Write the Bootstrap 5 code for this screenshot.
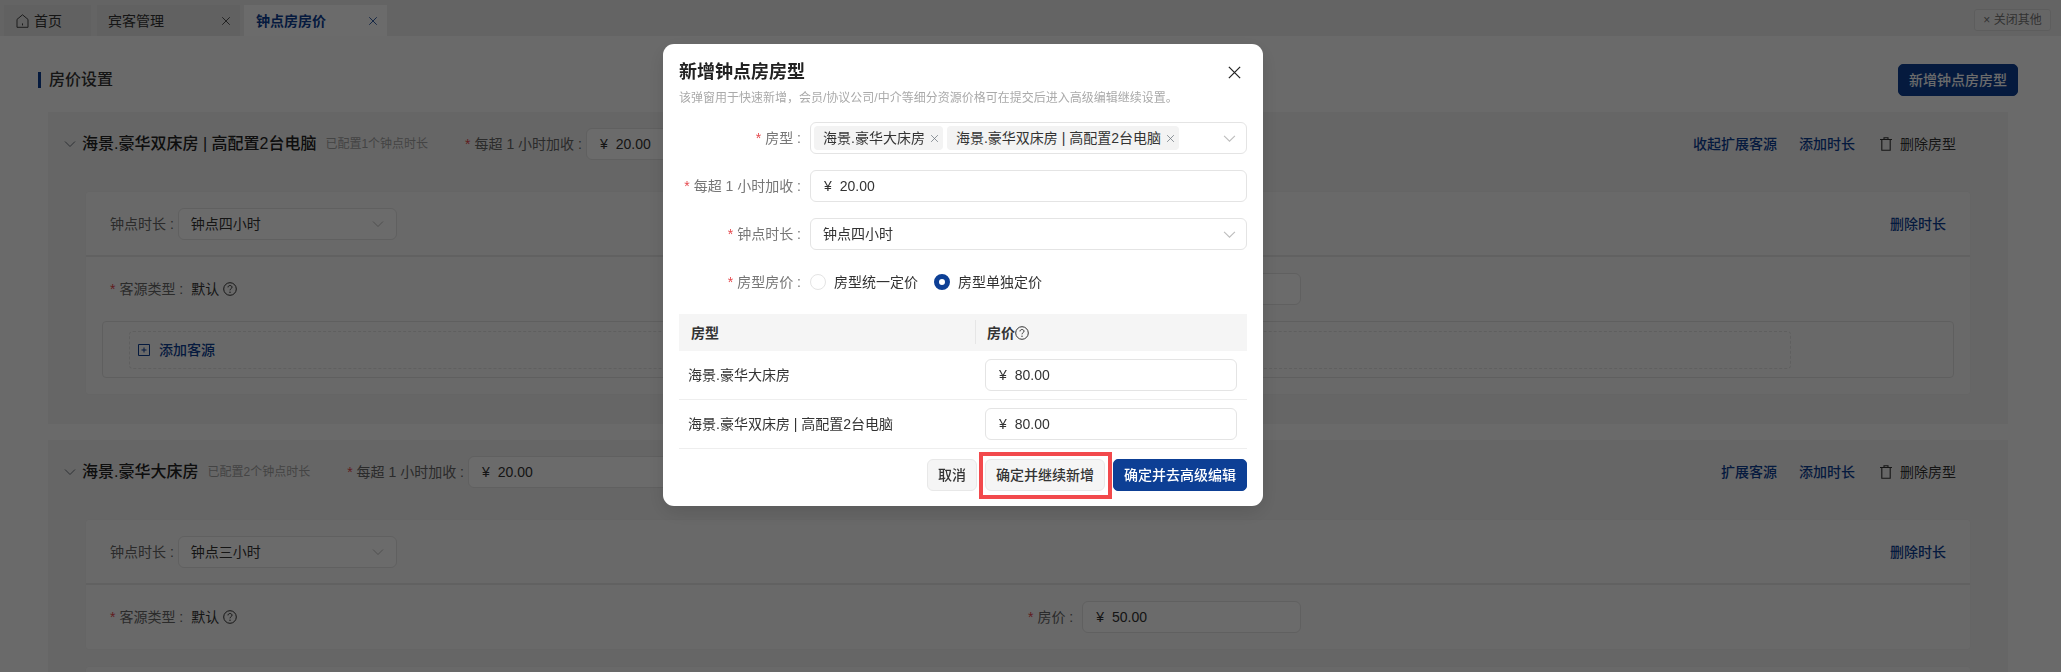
<!DOCTYPE html>
<html lang="zh-CN">
<head>
    <meta charset="UTF-8">
    <meta name="viewport" content="width=device-width, initial-scale=1.0">
    <title>钟点房房价</title>
    <link href="https://cdn.jsdelivr.net/npm/bootstrap@5.3.0/dist/css/bootstrap.min.css" rel="stylesheet">
    <style>
        html, body {
            height: 100%;
            overflow: hidden;
        }
        body {
            font-family: "Liberation Sans", "Noto Sans CJK SC", sans-serif;
            font-size: 14px;
            line-height: 20px;
            color: #333;
            background-color: #fdfdfd;
        }
        svg {
            display: block;
            flex: none;
        }
        .navy { color: #0d3f95; }
        .star { color: #e5484d; margin-right: 4px; }
        .lbl { color: #666; }
        .chev-soft { color: #bdbdbd; }

        /* tabs */
        .tab-strip {
            height: 36px;
            padding: 5px 10px 0 4px;
            background-color: #eeeeee;
        }
        .tab-item {
            height: 31px;
            padding: 0 9px 0 12px;
            background-color: #e6e6e6;
        }
        .tab-home { width: 87px; gap: 5px; }
        .tab-guest { width: 143px; margin-left: 6px; padding-left: 11px; }
        .tab-price { width: 143px; margin-left: 4px; background-color: #fff; }
        .close-other {
            width: 77px;
            height: 22px;
            margin-top: 4px;
            font-size: 12px;
            color: #777;
            background-color: #f4f4f4;
            border: 1px solid #dedede;
            border-radius: 3px;
        }

        /* page */
        .page-wrap {
            height: calc(100vh - 36px);
            overflow: hidden;
            padding: 28px 43px 0 38px;
        }
        .page-title {
            font-size: 16px;
            font-weight: 500;
            line-height: 16px;
            padding-left: 8px;
            border-left: 3px solid #0d3f95;
        }
        .btn-navy {
            height: 32px;
            padding: 0 10px;
            font-size: 14px;
            font-weight: 500;
            color: #fff;
            background-color: #0d3f95;
            border: 1px solid #0d3f95;
            border-radius: 5px;
        }
        .type-box {
            margin: 16px 10px 0 10px;
            padding-bottom: 13px;
            background-color: #f3f3f3;
        }
        .type-box + .type-box {
            padding-bottom: 0;
        }
        .type-head {
            height: 64px;
            padding: 0 52px 0 16px;
            margin-bottom: 15px;
        }
        .type-name {
            font-size: 16px;
            font-weight: 500;
            margin-left: 6px;
            color: #222;
        }
        .type-note {
            font-size: 12px;
            color: #a3a3a3;
            margin-left: 9px;
            margin-right: 37px;
        }
        .head-tools { gap: 22px; }
        .tool-del { margin-left: 3px; }
        .time-panel {
            margin: 0 37px 16px;
            background-color: #fbfbfb;
            border: 1px solid #f0f0f0;
            border-radius: 4px;
        }
        .panel-top {
            height: 65px;
            padding: 0 24px;
            border-bottom: 2px solid #e6e6e6;
        }
        .panel-row {
            height: 64px;
            padding: 0 24px;
        }
        .src-col { width: 918px; }
        .add-box {
            margin: 0 16px 16px;
            padding: 9px 162px 8px 26px;
            border: 1px solid #e2e2e2;
            border-radius: 4px;
        }
        .add-inner {
            height: 38px;
            padding-left: 8px;
            gap: 9px;
            border: 1px dashed #e2e2e2;
            border-radius: 4px;
        }
        .fld {
            height: 32px;
            padding: 0 12px;
            font-size: 14px;
            line-height: 20px;
            color: #333;
            border: 1px solid #e4e4e4;
            border-radius: 6px;
            background-color: #fff;
        }
        .fld-page { width: 219px; margin-left: 4px; }
        .panel-row .fld-page { margin-left: 9px; }
        .fld-wide { width: 300px; margin-left: 4px; }
        .fld-money { padding-left: 13px; gap: 8px; }

        /* modal */
        .modal-backdrop { --bs-backdrop-opacity: .58; }
        .dialog-pos {
            width: 600px;
            max-width: 600px;
            margin: 44px 0 0 663px;
        }
        .dialog-card {
            padding: 16px 16px 15px 16px;
            border: 0;
            border-radius: 11px;
            box-shadow: 0 6px 20px rgba(0, 0, 0, .12);
        }
        .dialog-title {
            font-size: 18px;
            font-weight: 600;
            line-height: 24px;
            margin: 0;
            color: #222;
        }
        .x-btn {
            padding: 0;
            margin-right: 5px;
            background: none;
            border: 0;
            color: #222;
        }
        .dialog-note {
            font-size: 12px;
            line-height: 20px;
            color: #aaa;
            margin: 4px 0 14px;
        }
        .form-line {
            min-height: 32px;
            margin-bottom: 16px;
        }
        .line-label {
            width: 122px;
            margin-right: 9px;
            text-align: right;
            color: #777;
            flex: none;
        }
        .form-line .fld { flex: 1; padding-right: 10px; }
        .room-tag {
            height: 24px;
            padding: 0 4px 0 9px;
            background-color: #f3f3f3;
            border-radius: 4px;
            white-space: nowrap;
            gap: 5px;
        }
        .fld-tags { padding-left: 3px; gap: 4px; }
        .radio-dot {
            width: 16px;
            height: 16px;
            margin: 0 8px 0 0;
            border-color: #e4e4e4;
        }
        .radio-dot:checked {
            background-color: #fff;
            background-image: none;
            border: 5px solid #0d3f95;
        }
        .room-table { margin: 0; }
        .room-table > :not(caption) > * > * {
            padding: 8px 9px;
            border-bottom-color: #eeeeee;
            color: #333;
            vertical-align: middle;
        }
        .room-table thead th {
            height: 37px;
            padding: 8px 12px;
            font-weight: 600;
            background-color: #f5f5f5;
            border-bottom: 0;
            position: relative;
        }
        .room-table thead th + th::before {
            content: "";
            position: absolute;
            left: 0;
            top: 6px;
            bottom: 7px;
            width: 1px;
            background-color: #e6e6e6;
        }
        .col-name { width: 296px; }
        .room-table td.cell-price { padding: 8px 10px; }
        .dialog-foot {
            margin-top: 10px;
            gap: 8px;
        }
        .btn-soft {
            height: 32px;
            padding: 0 10px;
            font-size: 14px;
            font-weight: 500;
            color: #333;
            background-color: #f5f5f5;
            border: 1px solid #e8e8e8;
            border-radius: 6px;
        }
        .mark-wrap { position: relative; }
        .mark-frame {
            position: absolute;
            inset: -7px -7px -8px -6px;
            border: 4px solid #f2494c;
            pointer-events: none;
        }
    </style>
</head>
<body>
    <svg width="0" height="0" class="position-absolute">
        <symbol id="i-chev" viewBox="0 0 12 12"><path d="M1 3.5l5 5 5-5" fill="none" stroke="currentColor" stroke-width="1"/></symbol>
        <symbol id="i-x" viewBox="0 0 12 12"><path d="M1.5 1.5l9 9M10.5 1.5l-9 9" fill="none" stroke="currentColor" stroke-width="1"/></symbol>
        <symbol id="i-help" viewBox="0 0 14 14"><circle cx="7" cy="7" r="6.3" fill="none" stroke="currentColor" stroke-width="1"/><path d="M5 5.4c0-1.2.9-1.9 2-1.9s2 .7 2 1.7c0 1.5-2 1.5-2 3.1" fill="none" stroke="currentColor" stroke-width="1"/><circle cx="7" cy="10.2" r=".7" fill="currentColor"/></symbol>
        <symbol id="i-trash" viewBox="0 0 12 14"><path d="M0 2.5h12M4 2.5V.7h4v1.8M1.8 2.5v10.8h8.4V2.5" fill="none" stroke="currentColor" stroke-width="1.1"/></symbol>
    </svg>

    <div class="tab-strip d-flex">
        <div class="tab-item tab-home d-flex align-items-center">
            <svg width="13" height="14" viewBox="0 0 13 14"><path d="M6.5.8L1 5.4v7.9h11V5.4zM6.5 9.4v2" fill="none" stroke="#444" stroke-width="1"/></svg>
            <span>首页</span>
        </div>
        <div class="tab-item tab-guest d-flex align-items-center justify-content-between">
            <span>宾客管理</span>
            <svg width="10" height="10"><use href="#i-x"/></svg>
        </div>
        <div class="tab-item tab-price d-flex align-items-center justify-content-between navy">
            <span class="fw-semibold">钟点房房价</span>
            <svg width="10" height="10"><use href="#i-x"/></svg>
        </div>
        <div class="close-other ms-auto d-flex align-items-center justify-content-center">× 关闭其他</div>
    </div>

    <main class="page-wrap">
        <div class="d-flex justify-content-between align-items-center">
            <div class="page-title">房价设置</div>
            <button class="btn-navy">新增钟点房房型</button>
        </div>

        <section class="type-box">
            <div class="type-head d-flex align-items-center">
                <svg width="12" height="12" class="text-secondary"><use href="#i-chev"/></svg>
                <span class="type-name">海景.豪华双床房 | 高配置2台电脑</span>
                <span class="type-note">已配置1个钟点时长</span>
                <span class="lbl"><span class="star">*</span>每超 1 小时加收 :</span>
                <div class="fld fld-wide fld-money d-flex align-items-center"><span>¥</span><span>20.00</span></div>
                <div class="head-tools d-flex align-items-center ms-auto">
                    <a class="navy text-decoration-none fw-medium">收起扩展客源</a>
                    <a class="navy text-decoration-none fw-medium">添加时长</a>
                    <span class="tool-del d-flex align-items-center gap-2"><svg width="12" height="14"><use href="#i-trash"/></svg>删除房型</span>
                </div>
            </div>
            <div class="time-panel">
                <div class="panel-top d-flex align-items-center">
                    <span class="lbl">钟点时长 :</span>
                    <div class="fld fld-page d-flex align-items-center justify-content-between"><span>钟点四小时</span><svg width="12" height="12" class="chev-soft"><use href="#i-chev"/></svg></div>
                    <a class="navy text-decoration-none fw-medium ms-auto">删除时长</a>
                </div>
                <div class="panel-row d-flex align-items-center">
                    <div class="src-col d-flex align-items-center">
                        <span class="lbl"><span class="star">*</span>客源类型 :</span>
                        <span class="ms-2">默认</span>
                        <svg width="14" height="14" class="ms-1"><use href="#i-help"/></svg>
                    </div>
                    <span class="lbl"><span class="star">*</span>房价 :</span>
                    <div class="fld fld-page fld-money d-flex align-items-center"><span>¥</span><span>50.00</span></div>
                </div>
                <div class="add-box">
                    <div class="add-inner d-flex align-items-center navy">
                        <svg width="12" height="12" viewBox="0 0 12 12"><path d="M.5.5h11v11H.5zM3.5 6h5M6 3.5v5" fill="none" stroke="currentColor" stroke-width="1"/></svg>
                        <span class="fw-medium">添加客源</span>
                    </div>
                </div>
            </div>
        </section>

        <section class="type-box">
            <div class="type-head d-flex align-items-center">
                <svg width="12" height="12" class="text-secondary"><use href="#i-chev"/></svg>
                <span class="type-name">海景.豪华大床房</span>
                <span class="type-note">已配置2个钟点时长</span>
                <span class="lbl"><span class="star">*</span>每超 1 小时加收 :</span>
                <div class="fld fld-wide fld-money d-flex align-items-center"><span>¥</span><span>20.00</span></div>
                <div class="head-tools d-flex align-items-center ms-auto">
                    <a class="navy text-decoration-none fw-medium">扩展客源</a>
                    <a class="navy text-decoration-none fw-medium">添加时长</a>
                    <span class="tool-del d-flex align-items-center gap-2"><svg width="12" height="14"><use href="#i-trash"/></svg>删除房型</span>
                </div>
            </div>
            <div class="time-panel">
                <div class="panel-top d-flex align-items-center">
                    <span class="lbl">钟点时长 :</span>
                    <div class="fld fld-page d-flex align-items-center justify-content-between"><span>钟点三小时</span><svg width="12" height="12" class="chev-soft"><use href="#i-chev"/></svg></div>
                    <a class="navy text-decoration-none fw-medium ms-auto">删除时长</a>
                </div>
                <div class="panel-row d-flex align-items-center">
                    <div class="src-col d-flex align-items-center">
                        <span class="lbl"><span class="star">*</span>客源类型 :</span>
                        <span class="ms-2">默认</span>
                        <svg width="14" height="14" class="ms-1"><use href="#i-help"/></svg>
                    </div>
                    <span class="lbl"><span class="star">*</span>房价 :</span>
                    <div class="fld fld-page fld-money d-flex align-items-center"><span>¥</span><span>50.00</span></div>
                </div>
            </div>
            <div class="time-panel"><div class="panel-top"></div></div>
        </section>
    </main>

    <div class="modal-backdrop show"></div>
    <div class="modal d-block" tabindex="-1">
        <div class="modal-dialog dialog-pos">
            <div class="modal-content dialog-card">
                <div class="d-flex justify-content-between align-items-center">
                    <h5 class="dialog-title">新增钟点房房型</h5>
                    <button class="x-btn" aria-label="关闭"><svg width="15" height="15"><use href="#i-x"/></svg></button>
                </div>
                <p class="dialog-note">该弹窗用于快速新增，会员/协议公司/中介等细分资源价格可在提交后进入高级编辑继续设置。</p>

                <div class="form-line d-flex align-items-center">
                    <label class="line-label"><span class="star">*</span>房型 :</label>
                    <div class="fld fld-tags d-flex align-items-center">
                        <span class="room-tag d-flex align-items-center">海景.豪华大床房<svg width="9" height="9" class="text-secondary"><use href="#i-x"/></svg></span>
                        <span class="room-tag d-flex align-items-center">海景.豪华双床房 | 高配置2台电脑<svg width="9" height="9" class="text-secondary"><use href="#i-x"/></svg></span>
                        <svg width="13" height="13" class="chev-soft ms-auto"><use href="#i-chev"/></svg>
                    </div>
                </div>
                <div class="form-line d-flex align-items-center">
                    <label class="line-label"><span class="star">*</span>每超 1 小时加收 :</label>
                    <div class="fld fld-money d-flex align-items-center"><span>¥</span><span>20.00</span></div>
                </div>
                <div class="form-line d-flex align-items-center">
                    <label class="line-label"><span class="star">*</span>钟点时长 :</label>
                    <div class="fld d-flex align-items-center justify-content-between"><span>钟点四小时</span><svg width="13" height="13" class="chev-soft"><use href="#i-chev"/></svg></div>
                </div>
                <div class="form-line d-flex align-items-center">
                    <span class="line-label"><span class="star">*</span>房型房价 :</span>
                    <label class="d-flex align-items-center me-3"><input class="form-check-input radio-dot" type="radio" name="pricing"><span>房型统一定价</span></label>
                    <label class="d-flex align-items-center"><input class="form-check-input radio-dot" type="radio" name="pricing" checked><span>房型单独定价</span></label>
                </div>

                <table class="table room-table">
                    <thead>
                        <tr>
                            <th class="col-name">房型</th>
                            <th><span class="d-flex align-items-center">房价<svg width="14" height="14"><use href="#i-help"/></svg></span></th>
                        </tr>
                    </thead>
                    <tbody>
                        <tr>
                            <td>海景.豪华大床房</td>
                            <td class="cell-price"><div class="fld fld-money d-flex align-items-center"><span>¥</span><span>80.00</span></div></td>
                        </tr>
                        <tr>
                            <td>海景.豪华双床房 | 高配置2台电脑</td>
                            <td class="cell-price"><div class="fld fld-money d-flex align-items-center"><span>¥</span><span>80.00</span></div></td>
                        </tr>
                    </tbody>
                </table>

                <div class="dialog-foot d-flex justify-content-end">
                    <button class="btn-soft">取消</button>
                    <span class="mark-wrap d-inline-block">
                        <button class="btn-soft">确定并继续新增</button>
                        <span class="mark-frame"></span>
                    </span>
                    <button class="btn-navy">确定并去高级编辑</button>
                </div>
            </div>
        </div>
    </div>
    <script src="https://cdn.jsdelivr.net/npm/bootstrap@5.3.0/dist/js/bootstrap.bundle.min.js"></script>
</body>
</html>
